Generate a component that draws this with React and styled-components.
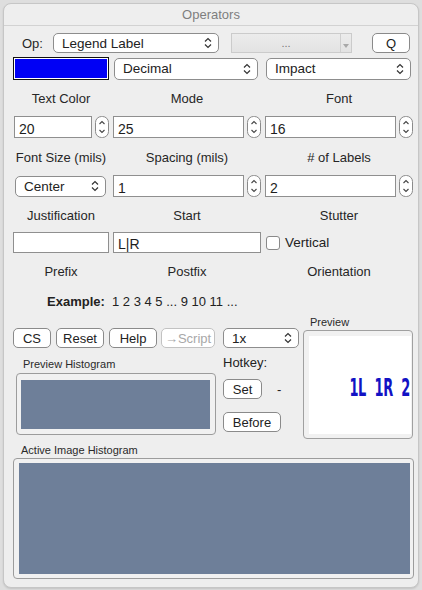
import React from 'react';
import styled, { createGlobalStyle } from 'styled-components';

const GlobalStyle = createGlobalStyle`
  html, body {
    margin: 0;
    padding: 0;
    background: #dedede;
    font-family: "Liberation Sans", Arial, sans-serif;
    color: #222;
  }
`;

const Window = styled.div`
  box-sizing: border-box;
  margin: 3px;
  width: 416px;
  height: 585px;
  border: 1px solid #c6c6c6;
  border-radius: 8px;
  background: #eeeeee;
  box-shadow: 0 1px 2px rgba(0, 0, 0, 0.12);
  overflow: hidden;
`;

const TitleBar = styled.div`
  height: 21px;
  border-bottom: 1px solid #d2d2d2;
  display: flex;
  align-items: center;
  justify-content: center;
  font-size: 13px;
  color: #7e7e7e;
`;

const Content = styled.div`
  padding: 0 5px 0 9px;
`;

const Row = styled.div`
  display: flex;
  align-items: center;
  height: ${({ h }) => h || 20}px;
  margin-top: ${({ mt }) => mt || 0}px;
  padding-left: ${({ pl }) => pl || 0}px;
`;

const Grid = styled.div`
  display: grid;
  grid-template-columns: 96px 148px 148px;
  column-gap: 4px;
  align-items: center;
  height: ${({ h }) => h || 20}px;
  margin-top: ${({ mt }) => mt || 0}px;
`;

const Label = styled.div`
  font-size: 13px;
  color: #262626;
  text-align: center;
  white-space: nowrap;
`;

const SmallLabel = styled.div`
  font-size: 11px;
  color: #2a2a2a;
  height: 14px;
  line-height: 14px;
  padding-left: ${({ pl }) => pl || 0}px;
  margin-top: ${({ mt }) => mt || 0}px;
`;

const PopBox = styled.div`
  box-sizing: border-box;
  width: ${({ w }) => (w ? `${w}px` : '100%')};
  height: ${({ h }) => h || 20}px;
  margin-left: ${({ ml }) => ml || 0}px;
  border: 1px solid #8d8d8d;
  border-radius: 5px;
  background: #fff;
  display: flex;
  align-items: center;
  justify-content: space-between;
  padding: 0 6px 0 8px;
  font-size: 13.5px;
  color: #222;
`;

const Chevrons = () => (
  <svg width="8" height="12" viewBox="0 0 8 12">
    <path d="M1 4.5 L4 1.5 L7 4.5 M1 7.5 L4 10.5 L7 7.5" fill="none" stroke="#333" strokeWidth="1.2" />
  </svg>
);

const PopUp = ({ children, ...rest }) => (
  <PopBox {...rest}>
    <span>{children}</span>
    <Chevrons />
  </PopBox>
);

const Combo = styled.div`
  box-sizing: border-box;
  width: 121px;
  height: 20px;
  margin-left: 12px;
  border: 1px solid #cbcbcb;
  background: linear-gradient(#ececec, #e3e3e3);
  display: flex;
  align-items: stretch;
  font-size: 11px;
  color: #777;
`;

const ComboText = styled.div`
  flex: 1;
  display: flex;
  align-items: center;
  justify-content: center;
  border-right: 1px solid #cfcfcf;
`;

const ComboArrow = styled.div`
  width: 10px;
  display: flex;
  align-items: flex-end;
  justify-content: center;
  padding-bottom: 4px;
`;

const Button = styled.div`
  box-sizing: border-box;
  width: ${({ w }) => w}px;
  height: ${({ h }) => h || 20}px;
  margin-left: ${({ ml }) => ml || 0}px;
  border: 1px solid ${({ disabled }) => (disabled ? '#c2c2c2' : '#8a8a8a')};
  border-radius: 5px;
  background: #fff;
  display: flex;
  align-items: center;
  justify-content: center;
  font-size: 13px;
  color: ${({ disabled }) => (disabled ? '#a8a8a8' : '#222')};
  white-space: nowrap;
`;

const ColorWell = styled.div`
  box-sizing: border-box;
  width: 96px;
  height: 23px;
  border: 1px solid #111;
  padding: 1px;
  background: #fff;
  & > div {
    width: 100%;
    height: 100%;
    background: #0000f5;
  }
`;

const Field = styled.div`
  box-sizing: border-box;
  flex: 1;
  height: ${({ h }) => h || 22}px;
  margin-left: ${({ ml }) => ml || 0}px;
  border: 1px solid #8f8f8f;
  background: #fff;
  display: flex;
  align-items: center;
  padding: 3px 0 0 4px;
  font-size: 14px;
  color: #1e1e1e;
`;

const Cell = styled.div`
  display: flex;
  align-items: center;
  gap: ${({ gap }) => (gap === undefined ? 3 : gap)}px;
  height: 100%;
`;

const Stepper = () => (
  <svg width="14" height="22" viewBox="0 0 14 22">
    <rect x="0.5" y="0.5" width="13" height="21" rx="6" fill="#fff" stroke="#8a8a8a" />
    <path d="M4.5 8 L7 5.5 L9.5 8 M4.5 14 L7 16.5 L9.5 14" fill="none" stroke="#444" strokeWidth="1.1" />
  </svg>
);

const NumField = ({ value, ml }) => (
  <Cell>
    <Field ml={ml}>{value}</Field>
    <Stepper />
  </Cell>
);

const CheckBox = styled.div`
  box-sizing: border-box;
  width: 14px;
  height: 14px;
  border: 1px solid #8a8a8a;
  border-radius: 3px;
  background: #fff;
  margin-left: 1px;
`;

const CheckText = styled.span`
  font-size: 13.5px;
  color: #222;
  margin-left: 5px;
`;

const Example = styled.div`
  display: flex;
  align-items: center;
  height: 18px;
  margin-top: ${({ mt }) => mt}px;
  padding-left: 34px;
  font-size: 13px;
  & b {
    width: 65px;
  }
`;

const Bottom = styled.div`
  display: flex;
  align-items: flex-start;
  margin-top: 5px;
`;

const LeftCol = styled.div`
  width: 204px;
  margin-top: 13px;
`;

const MidCol = styled.div`
  width: 76px;
  margin-left: 6px;
  margin-top: 13px;
`;

const RightCol = styled.div`
  width: 110px;
  margin-left: 4px;
`;

const HistoFrame = styled.div`
  box-sizing: border-box;
  width: ${({ w }) => w}px;
  height: ${({ h }) => h}px;
  margin-left: ${({ ml }) => ml || 0}px;
  margin-top: ${({ mt }) => mt || 0}px;
  border: 1px solid #9c9c9c;
  border-radius: 4px;
  background: #f1f1f1;
  padding: ${({ pad }) => pad};
  & > div {
    width: 100%;
    height: 100%;
    background: #6e7f99;
  }
`;

const Hotkey = styled.div`
  font-size: 13px;
  color: #222;
  margin-top: 7px;
  height: 16px;
`;

const Dash = styled.span`
  font-size: 13px;
  margin-left: 15px;
`;

const PreviewFrame = styled.div`
  box-sizing: border-box;
  width: 110px;
  height: 109px;
  margin-top: 1px;
  border: 1px solid #a0a0a0;
  border-radius: 4px;
  background: #f1f1f1;
  padding: 5px 1px 4px 5px;
`;

const PreviewCanvas = styled.div`
  width: 100%;
  height: 100%;
  background: #fff;
  display: flex;
  align-items: center;
  justify-content: flex-end;
  overflow: hidden;
`;

const PreviewText = styled.span`
  font-family: "DejaVu Sans Condensed", "DejaVu Sans", sans-serif;
  font-weight: bold;
  font-size: 24px;
  color: #1212c4;
  white-space: pre;
  margin-right: 1px;
  margin-top: 6px;
  transform: scaleX(0.6);
  transform-origin: right center;
  letter-spacing: -0.5px;
`;

export default function App() {
  return (
    <>
      <GlobalStyle />
      <Window>
        <TitleBar>Operators</TitleBar>
        <Content>
          <Row mt={7} h={20} pl={9}>
            <Label>Op:</Label>
            <PopUp w={166} ml={10}>Legend Label</PopUp>
            <Combo>
              <ComboText>...</ComboText>
              <ComboArrow>
                <svg width="6" height="4" viewBox="0 0 6 4">
                  <path d="M0 0 L6 0 L3 4 Z" fill="#a8a8a8" />
                </svg>
              </ComboArrow>
            </Combo>
            <Button w={38} ml={20}>Q</Button>
          </Row>

          <Row mt={4} h={23}>
            <ColorWell><div /></ColorWell>
            <PopUp w={144} h={22} ml={5}>Decimal</PopUp>
            <PopUp w={145} h={22} ml={8}>Impact</PopUp>
          </Row>

          <Grid mt={9} h={18}>
            <Label>Text Color</Label>
            <Label>Mode</Label>
            <Label>Font</Label>
          </Grid>

          <Grid mt={9} h={22}>
            <NumField value="20" ml={1} />
            <NumField value="25" />
            <NumField value="16" />
          </Grid>

          <Grid mt={10} h={18}>
            <Label>Font Size (mils)</Label>
            <Label>Spacing (mils)</Label>
            <Label># of Labels</Label>
          </Grid>

          <Grid mt={9} h={22}>
            <Cell>
              <PopUp w={91} h={21} ml={2}>Center</PopUp>
            </Cell>
            <NumField value="1" />
            <NumField value="2" />
          </Grid>

          <Grid mt={9} h={18}>
            <Label>Justification</Label>
            <Label>Start</Label>
            <Label>Stutter</Label>
          </Grid>

          <Grid mt={8} h={21}>
            <Cell gap={0}>
              <Field h={21} />
            </Cell>
            <Cell gap={0}>
              <Field h={21}>L|R</Field>
            </Cell>
            <Cell gap={0}>
              <CheckBox />
              <CheckText>Vertical</CheckText>
            </Cell>
          </Grid>

          <Grid mt={9} h={18}>
            <Label>Prefix</Label>
            <Label>Postfix</Label>
            <Label>Orientation</Label>
          </Grid>

          <Example mt={12}>
            <b>Example:</b>
            <span>1 2 3 4 5 ... 9 10 11 ...</span>
          </Example>

          <Bottom>
            <LeftCol>
              <Row h={20}>
                <Button w={38}>CS</Button>
                <Button w={48} ml={5}>Reset</Button>
                <Button w={48} ml={5}>Help</Button>
                <Button w={54} ml={4} disabled>→Script</Button>
              </Row>
              <SmallLabel pl={10} mt={9}>Preview Histogram</SmallLabel>
              <HistoFrame w={200} h={62} ml={3} mt={2} pad="6px 5px 5px 4px">
                <div />
              </HistoFrame>
            </LeftCol>

            <MidCol>
              <PopUp w={76} h={20}>1x</PopUp>
              <Hotkey>Hotkey:</Hotkey>
              <Row mt={8} h={20}>
                <Button w={39}>Set</Button>
                <Dash>-</Dash>
              </Row>
              <Row mt={13} h={20}>
                <Button w={58}>Before</Button>
              </Row>
            </MidCol>

            <RightCol>
              <SmallLabel pl={7}>Preview</SmallLabel>
              <PreviewFrame>
                <PreviewCanvas>
                  <PreviewText>1L  1R  2</PreviewText>
                </PreviewCanvas>
              </PreviewFrame>
            </RightCol>
          </Bottom>

          <SmallLabel pl={8} mt={4}>Active Image Histogram</SmallLabel>
          <HistoFrame w={401} h={121} mt={1} pad="4px 3px 4px 5px">
            <div />
          </HistoFrame>
        </Content>
      </Window>
    </>
  );
}
